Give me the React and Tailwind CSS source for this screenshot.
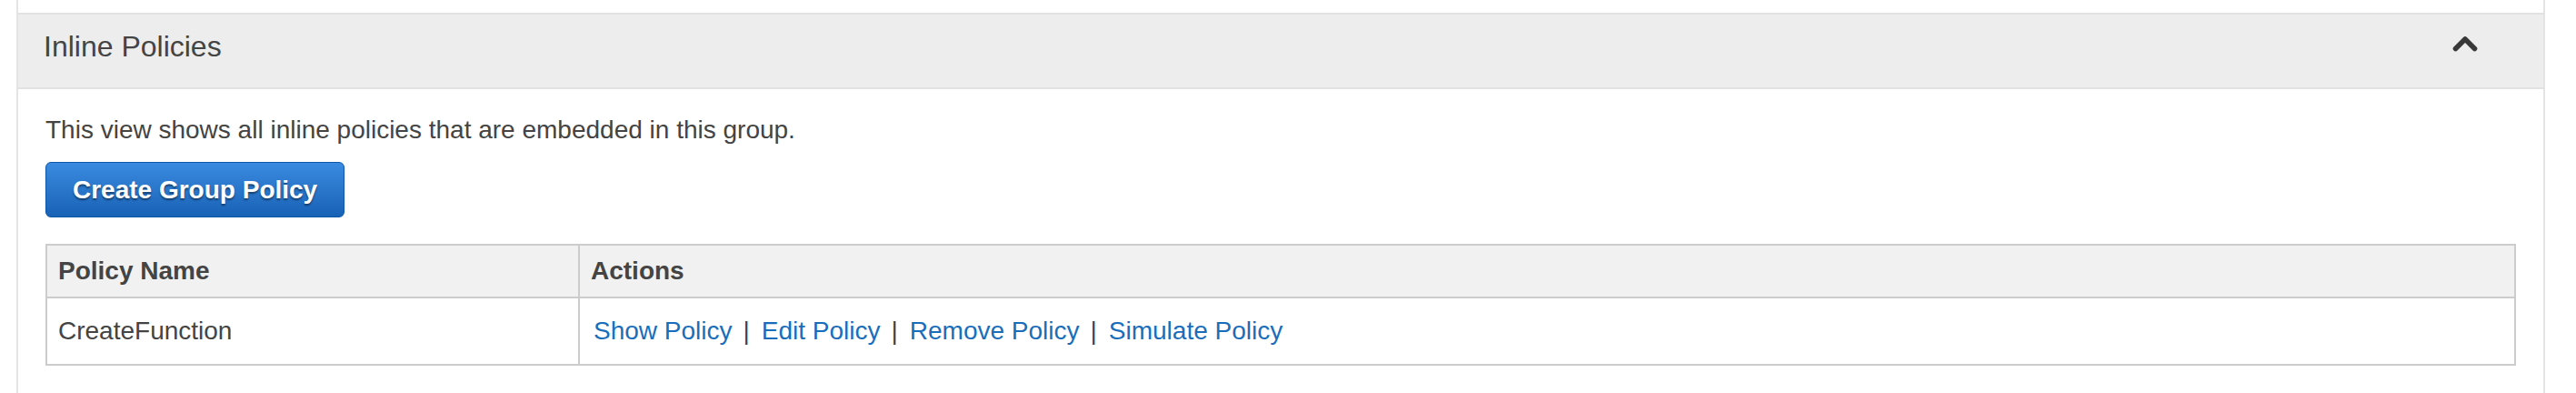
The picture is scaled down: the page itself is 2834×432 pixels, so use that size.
import React from "react";

function ChevronUp() {
  return (
    <svg width="28" height="18" viewBox="0 0 28 18" fill="none" aria-hidden="true">
      <polyline
        points="3.5,14.5 14,4 24.5,14.5"
        stroke="#383838"
        strokeWidth="5.6"
        strokeLinecap="round"
        strokeLinejoin="round"
      />
    </svg>
  );
}

const links = ["Show Policy", "Edit Policy", "Remove Policy", "Simulate Policy"];

export default function App() {
  return (
    <div className="w-[2834px] h-[432px] overflow-hidden bg-white font-['Liberation_Sans',Arial,sans-serif] text-[#444444]">
      <div className="ml-[18px] w-[2782px] border-x-2 border-[#e4e4e4] pt-[14px] pb-[30px]">
        {/* Section header */}
        <div className="flex items-start justify-between h-[84px] border-y-2 border-[#e2e2e2] bg-[#ededed] pl-[28px] pr-[72px] pt-[15px]">
          <h2 className="text-[32px] leading-[40px] font-normal text-[#444444]">Inline Policies</h2>
          <div className="mt-[8px]">
            <ChevronUp />
          </div>
        </div>

        {/* Section body */}
        <div className="px-[30px] pt-[25px]">
          <p className="text-[28px] leading-[40px]">
            This view shows all inline policies that are embedded in this group.
          </p>

          <button
            type="button"
            className="mt-[15px] flex items-center h-[61px] px-[29px] rounded-[6px] border border-[#0c56aa] bg-gradient-to-b from-[#3a8be0] to-[#1862b6] text-white text-[28px] font-bold leading-none [text-shadow:0_2px_2px_rgba(0,0,0,0.45)]"
          >
            Create Group Policy
          </button>

          {/* Table */}
          <div className="mt-[29px] border-2 border-[#cccccc] text-[28px]">
            <div className="grid grid-cols-[586px_1fr] h-[58px] bg-[#f1f1f1] border-b-2 border-[#cccccc] font-bold">
              <div className="flex items-center pl-[12px] border-r-2 border-[#cccccc]">Policy Name</div>
              <div className="flex items-center pl-[12px]">Actions</div>
            </div>
            <div className="grid grid-cols-[586px_1fr] h-[72px] bg-white">
              <div className="flex items-center pl-[12px] border-r-2 border-[#cccccc]">CreateFunction</div>
              <div className="flex items-center pl-[15px]">
                {links.map((l, i) => (
                  <React.Fragment key={l}>
                    {i > 0 && <span className="ml-[12px] mr-[13px] text-[#444444]">|</span>}
                    <a href="#" className="text-[#196ebc] no-underline">{l}</a>
                  </React.Fragment>
                ))}
              </div>
            </div>
          </div>
        </div>
      </div>
    </div>
  );
}
